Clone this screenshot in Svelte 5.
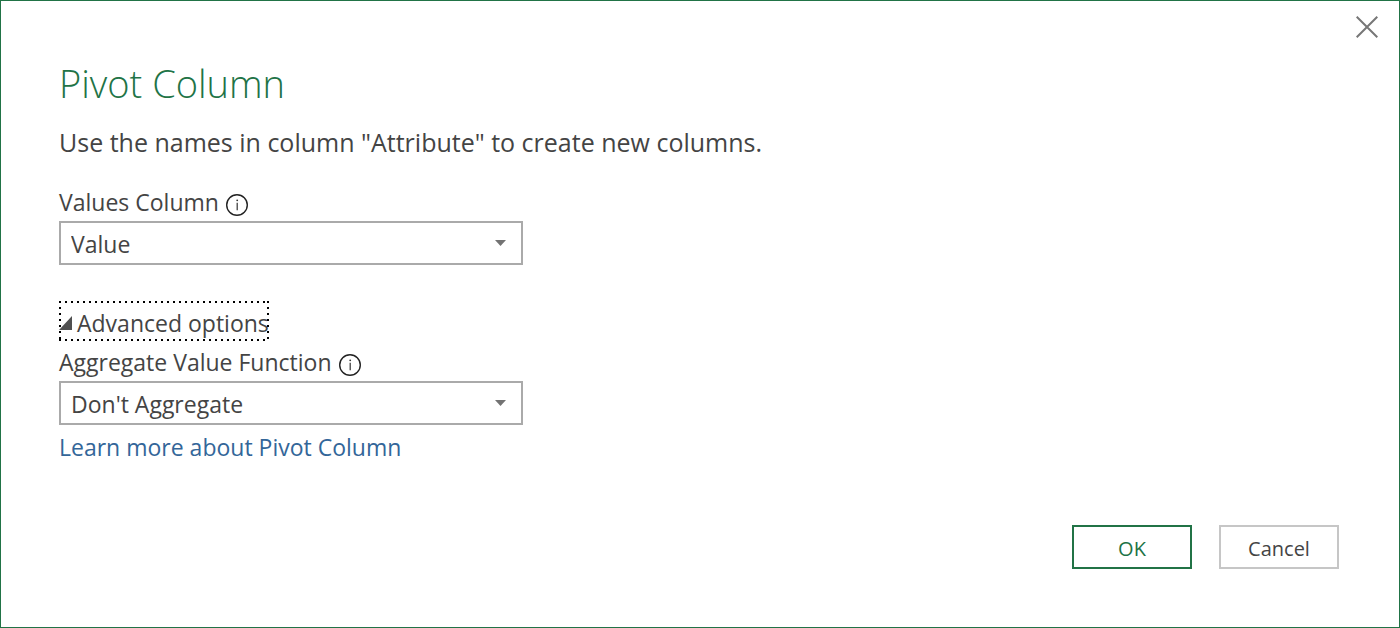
<script>
  let valuesColumn = $state('Value');
  let aggregate = $state("Don't Aggregate");
  let expanded = $state(true);
</script>

{#snippet infoIcon()}
  <svg width="24" height="24" viewBox="0 0 24 24" aria-hidden="true">
    <circle cx="12" cy="12" r="10.3" fill="none" stroke="#222" stroke-width="1.400" />
    <path d="M12.200 9.800v7.400" stroke="#333" stroke-width="1.200" />
    <circle cx="12.200" cy="7.300" r=".9" fill="#333" />
  </svg>
{/snippet}

{#snippet arrow()}
  <svg class="arrow" width="11" height="6" viewBox="0 0 11 6" aria-hidden="true">
    <path d="M0 0h11L5.500 6z" fill="#737373" />
  </svg>
{/snippet}

<div class="dialog" role="dialog" aria-labelledby="title">
  <header>
    <button class="close" type="button" aria-label="Close">
      <svg width="22" height="22" viewBox="0 0 22 22" aria-hidden="true">
        <path d="M.7.700l20.600 20.600M21.300.700L.7 21.300" stroke="#777" stroke-width="2" fill="none" />
      </svg>
    </button>
  </header>

  <main>
    <h1 id="title">Pivot Column</h1>
    <p>Use the names in column "Attribute" to create new columns.</p>

    <div class="label-row">
      <label for="values">Values Column</label>
      <button class="info" type="button" aria-label="About values column">{@render infoIcon()}</button>
    </div>
    <div class="field">
      <select id="values" bind:value={valuesColumn}>
        <option>Value</option>
        <option>Attribute</option>
      </select>
      {@render arrow()}
    </div>

    <button class="advanced" type="button" aria-expanded={expanded} onclick={() => (expanded = !expanded)}>
      <svg class:collapsed={!expanded} width="13" height="14" viewBox="0 0 13 14" aria-hidden="true">
        <path d="M13 0v14H0z" fill="#505050" />
      </svg>
      <span>Advanced options</span>
    </button>

    {#if expanded}
      <div class="label-row">
        <label for="aggregate">Aggregate Value Function</label>
        <button class="info" type="button" aria-label="About aggregate value function">{@render infoIcon()}</button>
      </div>
      <div class="field">
        <select id="aggregate" bind:value={aggregate}>
          <option>Don't Aggregate</option>
          <option>Count (All)</option>
          <option>Sum</option>
        </select>
        {@render arrow()}
      </div>
    {/if}
    <a href="#learn">Learn more about Pivot Column</a>
  </main>

  <footer>
    <button class="action primary" type="button">OK</button>
    <button class="action" type="button">Cancel</button>
  </footer>
</div>

<style>
  :global(body) {
    margin: 0;
    background: #fff;
  }

  .dialog {
    box-sizing: border-box;
    min-height: 100vh;
    display: flex;
    flex-direction: column;
    border: 1px solid #217346;
    background: #fff;
    color: #444;
    font-family: 'Segoe UI', 'Open Sans', sans-serif;
    font-size: 23px;
    line-height: 32px;
  }

  button {
    padding: 0;
    border: 0;
    background: none;
    color: inherit;
    font: inherit;
    cursor: pointer;
  }

  header {
    display: flex;
    justify-content: flex-end;
    padding: 15px 21px 0;
  }

  .close,
  .info {
    display: flex;
  }

  main {
    display: flex;
    flex-direction: column;
    align-items: flex-start;
    padding: 19px 58px 0;
  }

  h1 {
    margin: 0;
    color: #217346;
    font-family: 'Segoe UI Light', 'Open Sans', sans-serif;
    font-size: 38px;
    font-weight: 300;
    line-height: 52px;
  }

  p {
    margin: 17px 0 28px;
    font-size: 25px;
  }

  .label-row {
    display: flex;
    align-items: center;
    gap: 6px;
  }

  .info {
    margin-top: 5px;
  }

  .field {
    position: relative;
    width: 100%;
    max-width: 464px;
    margin-top: 3px;
  }

  select {
    appearance: none;
    box-sizing: border-box;
    display: block;
    width: 100%;
    height: 44px;
    padding: 2px 40px 0 10px;
    border: 2px solid #aaa;
    border-radius: 0;
    background: #fff;
    color: inherit;
    font: inherit;
  }

  .arrow {
    position: absolute;
    top: 19px;
    right: 17px;
    pointer-events: none;
  }

  .advanced {
    position: relative;
    display: flex;
    align-items: center;
    gap: 5px;
    height: 40px;
    margin: 36px 0 5px;
    padding-top: 3px;
    box-sizing: border-box;
  }

  /* Dotted focus frame, drawn over the label's edges */
  .advanced::after {
    content: '';
    position: absolute;
    inset: 0;
    --across: repeating-linear-gradient(90deg, #000 0 2px, transparent 2px 6px);
    --down: repeating-linear-gradient(180deg, #000 0 2px, transparent 2px 6px);
    background:
      var(--across) top / 100% 2px no-repeat,
      var(--across) bottom / 100% 2px no-repeat,
      var(--down) left / 2px 100% no-repeat,
      var(--down) right / 2px 100% no-repeat;
  }

  .collapsed {
    transform: rotate(-45deg);
  }

  a {
    margin-top: 6px;
    color: #336699;
    text-decoration: none;
  }

  footer {
    display: flex;
    justify-content: flex-end;
    gap: 27px;
    margin-top: auto;
    padding: 24px 60px 58px;
  }

  .action {
    width: 120px;
    height: 44px;
    padding-top: 3px;
    border: 2px solid #c6c6c6;
    font-size: 20px;
  }

  .primary {
    border-color: #217346;
    color: #217346;
  }
</style>
